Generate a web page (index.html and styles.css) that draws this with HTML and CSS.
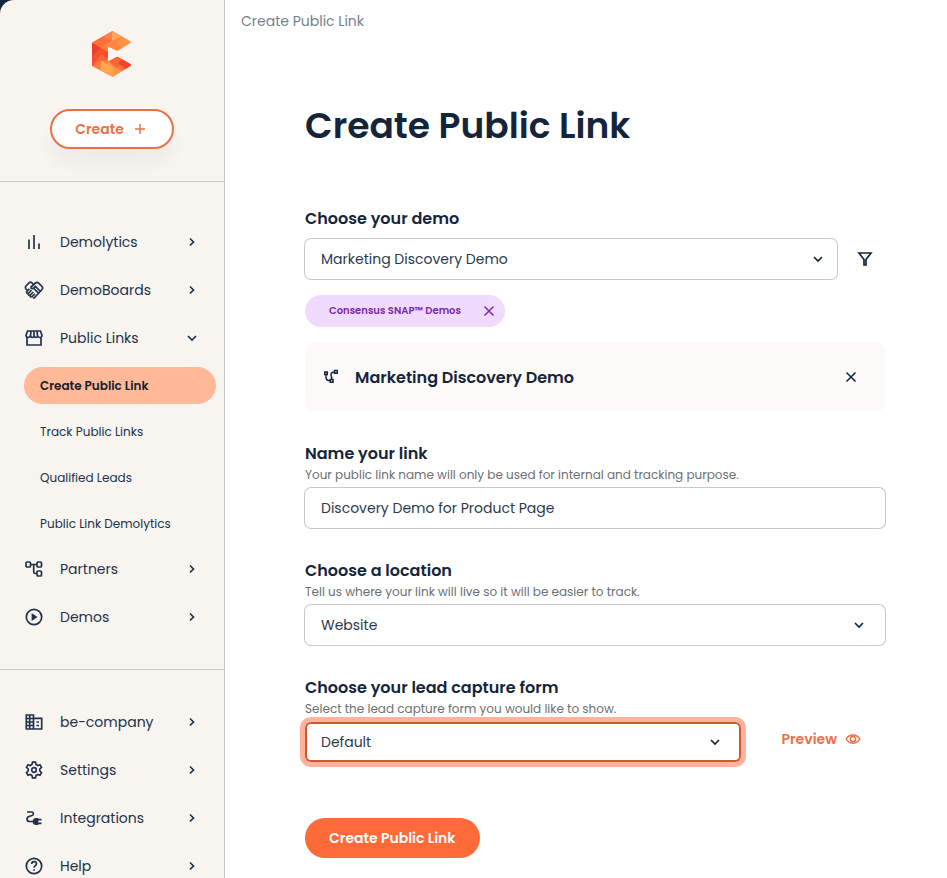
FILE: index.html
```html
<!DOCTYPE html>
<html lang="en">
<head>
    <meta charset="UTF-8">
    <meta name="viewport" content="width=device-width, initial-scale=1">
    <title>Create Public Link</title>
    <link rel="stylesheet" href="styles.css">
</head>
<body>
    <svg class="sprite" width="0" height="0" aria-hidden="true">
        <symbol id="chevron" viewBox="0 0 16 16">
            <path d="M6 4.500 9.500 8 6 11.500"/>
        </symbol>
        <symbol id="chevron-down" viewBox="0 0 16 16">
            <path d="M4 6l4 4 4-4"/>
        </symbol>
        <symbol id="close" viewBox="0 0 16 16">
            <path d="M3.500 3.500l9 9M12.500 3.500l-9 9"/>
        </symbol>
    </svg>

    <div class="layout">
        <aside class="sidebar">
            <div class="sidebar-top">
                <svg class="logo" viewBox="0 0 40 46" role="img" aria-label="Consensus">
                    <defs>
                        <clipPath id="logo-shape">
                            <path d="M20 .3Q20.800 0 21.600.5L38.500 10.300Q39.800 11.200 38.500 12L26.300 19.500Q25.500 20 24.500 19.500L17.500 16Q16 15.300 16 17V29Q16 30.500 17.500 29.800L24.500 26Q25.500 25.500 26.300 26L38.500 33Q39.800 34 38.500 35L21.600 45.200Q20.500 46 19.400 45.200L1 35.500Q0 35 0 34V12.500Q0 11.500 1 11Z"/>
                        </clipPath>
                        <linearGradient id="logo-top" x1="0" y1="0" x2="1" y2="0">
                            <stop offset="0" stop-color="#fb6a36"/>
                            <stop offset="1" stop-color="#ffa04a"/>
                        </linearGradient>
                        <linearGradient id="logo-bottom" x1="0" y1="0" x2="1" y2="0">
                            <stop offset="0" stop-color="#ff8b42"/>
                            <stop offset=".5" stop-color="#ff9646"/>
                            <stop offset="1" stop-color="#f0402a"/>
                        </linearGradient>
                    </defs>
                    <g clip-path="url(#logo-shape)">
                        <path fill="url(#logo-top)" d="M0 0h40v23H0Z"/>
                        <path fill="url(#logo-bottom)" d="M0 23h40v23H0Z"/>
                        <path fill="#fa8050" d="M10 5.500 20 0v10Z"/>
                        <path fill="#ffa661" d="M20 0v10l10-5Z"/>
                        <path fill="#fc6f38" d="M10 5.500 20 10l-9 5L0 12Z"/>
                        <path fill="#ff8840" d="M11 15l9-5 10 5-5 5Z"/>
                        <path fill="#f4502c" d="M0 12l16 9v6L0 36Z"/>
                        <path fill="#ea4029" d="M0 12l9 5-9 8Z"/>
                        <path fill="#fb6636" d="M0 36l9-13 7 6Z"/>
                        <path fill="#ff7d40" d="M0 35l10-6 11 6v11Z"/>
                        <path fill="#ffa650" d="M10 30l11 6v10L8 39Z"/>
                        <path fill="#ff9244" d="M21 36l10 4-10 6Z"/>
                        <path fill="#fb6536" d="M16 30l9-5 8 5-8 7Z"/>
                        <path fill="#f0442b" d="M30 28l10 6-6 4-8-6Z"/>
                    </g>
                </svg>
                <button type="button" class="btn-create">
                    Create
                    <svg class="plus" viewBox="0 0 12 12"><path d="M6 1v10M1 6h10"/></svg>
                </button>
            </div>

            <nav class="menu">
                <a href="#" class="menu-item">
                    <svg class="icon" viewBox="0 0 20 20"><path d="M5 7.500V17M10 3v14M15 11.500V17"/></svg>
                    <span>Demolytics</span>
                    <svg class="arrow"><use href="#chevron"/></svg>
                </a>
                <a href="#" class="menu-item">
                    <svg class="icon" viewBox="0 0 20 20"><path d="M3.200 10.200 2 9Q.8 7.500 2 6L5 2.800Q6.500 1.500 8 2.800L9 3.800M6.500 7.500 11.500 3Q13 1.800 14.500 3L18 6.500Q19.300 8 18 9.500L10.700 17.500Q9.800 18.300 9 17.500M6.500 7.500Q8 9.300 9.800 8L11.500 6.500 16 11M9.800 8.500 14 12.700M2.700 11.500 5.500 8.800M4.200 13.500 7.500 10.200M6 15.300 9.300 12M7.700 17 11 13.800M2.700 11.500Q2 13 4.200 13.500 4 15.500 6 15.300 6 17 7.700 17"/></svg>
                    <span>DemoBoards</span>
                    <svg class="arrow"><use href="#chevron"/></svg>
                </a>
                <a href="#" class="menu-item">
                    <svg class="icon" viewBox="0 0 20 20"><path d="M3.500 3h13L18 7.500Q17.800 9.500 16 9.500T13.500 7.700Q13 9.500 11.700 9.500T10 7.700Q9.500 9.500 8.200 9.500T6.500 7.700Q5.700 9.500 4 9.500T2 7.500ZM3 9.500V17h14V9.500M7 3l-.5 5M10 3v5M13 3l.5 5"/></svg>
                    <span>Public Links</span>
                    <svg class="arrow"><use href="#chevron-down"/></svg>
                </a>
                <div class="submenu">
                    <a href="#" class="active">Create Public Link</a>
                    <a href="#">Track Public Links</a>
                    <a href="#">Qualified Leads</a>
                    <a href="#">Public Link Demolytics</a>
                </div>
                <a href="#" class="menu-item">
                    <svg class="icon" viewBox="0 0 20 20"><rect x="2" y="3" width="4.500" height="5" rx="1"/><rect x="13" y="3" width="4.500" height="5" rx="1"/><rect x="13" y="12" width="4.500" height="5" rx="1"/><path d="M6.500 5.500H13M9.700 5.500V13q0 1.500 1.500 1.500H13"/></svg>
                    <span>Partners</span>
                    <svg class="arrow"><use href="#chevron"/></svg>
                </a>
                <a href="#" class="menu-item">
                    <svg class="icon" viewBox="0 0 20 20"><circle cx="10" cy="10" r="7.700"/><path class="solid" d="M8.500 7.700l3.500 2.300-3.500 2.300Z"/></svg>
                    <span>Demos</span>
                    <svg class="arrow"><use href="#chevron"/></svg>
                </a>
            </nav>

            <nav class="menu menu-bottom">
                <a href="#" class="menu-item">
                    <svg class="icon" viewBox="0 0 20 20"><path d="M2.300 3H9.500v14H2.300ZM9.500 6.300H17.700V17H9.500M2.300 6.500h7.200M2.300 10h7.200M2.300 13.500h7.200M5.700 3v14M12.500 10H15M12.500 13.500H15"/></svg>
                    <span>be-company</span>
                    <svg class="arrow"><use href="#chevron"/></svg>
                </a>
                <a href="#" class="menu-item">
                    <svg class="icon" viewBox="0 0 20 20"><circle cx="10" cy="10" r="2.300"/><path d="M8.500 2.200h3l.5 2.300 1.800 1 2.200-.8 1.500 2.600L15.800 9v2l1.700 1.700-1.500 2.600-2.200-.8-1.800 1-.5 2.300h-3L8 15.500l-1.800-1-2.200.8-1.500-2.600L4.200 11V9L2.500 7.300 4 4.700l2.200.8L8 4.500Z"/></svg>
                    <span>Settings</span>
                    <svg class="arrow"><use href="#chevron"/></svg>
                </a>
                <a href="#" class="menu-item">
                    <svg class="icon" viewBox="0 0 20 20"><path d="M3 4h4.500c2.500 0 2.500 3 .5 3.500L5 8.500c-2.800 1-2.500 5 .5 5H9"/><path class="solid" d="M9.500 13.500c0-1.500 1-2.700 2.700-2.700H13.500v5.400h-1.300C10.500 16.200 9.500 15 9.500 13.500Z"/><path d="M14 11.700h3.500M14 15.300h3.500"/></svg>
                    <span>Integrations</span>
                    <svg class="arrow"><use href="#chevron"/></svg>
                </a>
                <a href="#" class="menu-item">
                    <svg class="icon" viewBox="0 0 20 20"><circle cx="10" cy="10" r="7.700"/><path d="M7.700 8c0-3.200 4.800-3 4.800-.2 0 1.900-2.400 1.900-2.400 4M10.100 13.200v1.500"/></svg>
                    <span>Help</span>
                    <svg class="arrow"><use href="#chevron"/></svg>
                </a>
            </nav>
        </aside>

        <main class="content">
            <div class="breadcrumb">Create Public Link</div>
            <form class="link-form">
                <h1>Create Public Link</h1>

                <div class="field">
                    <label for="demo">Choose your demo</label>
                    <div class="field-row demo-row">
                        <div class="select">
                            <select id="demo">
                                <option>Marketing Discovery Demo</option>
                            </select>
                            <svg class="arrow"><use href="#chevron-down"/></svg>
                        </div>
                        <button type="button" class="icon-btn filter" aria-label="Filter demos">
                            <svg viewBox="0 0 16 16"><path d="M2 2h12L9 8.500V14H7V8.500Z"/></svg>
                        </button>
                    </div>
                    <div class="tag">
                        Consensus SNAP™ Demos
                        <button type="button" class="icon-btn" aria-label="Remove filter"><svg><use href="#close"/></svg></button>
                    </div>
                    <div class="selected-demo">
                        <svg class="path-icon" viewBox="0 0 16 16"><path d="M1.700 3h2.600v2.600H1.700ZM11.500 1.500h2.700v2.700h-2.700ZM7.300 10.500h2.700v2.700H7.300ZM3 5.600V8q0 3.800 4.300 3.800M11.500 3Q8 3 8 6q0 1 .6 2v2.500"/></svg>
                        <span>Marketing Discovery Demo</span>
                        <button type="button" class="icon-btn" aria-label="Remove demo"><svg><use href="#close"/></svg></button>
                    </div>
                </div>

                <div class="field">
                    <label for="name">Name your link</label>
                    <p class="hint">Your public link name will only be used for internal and tracking purpose.</p>
                    <input type="text" id="name" value="Discovery Demo for Product Page">
                </div>

                <div class="field">
                    <label for="location">Choose a location</label>
                    <p class="hint">Tell us where your link will live so it will be easier to track.</p>
                    <div class="select">
                        <select id="location">
                            <option>Website</option>
                        </select>
                        <svg class="arrow"><use href="#chevron-down"/></svg>
                    </div>
                </div>

                <div class="field">
                    <label for="lead-form">Choose your lead capture form</label>
                    <p class="hint">Select the lead capture form you would like to show.</p>
                    <div class="field-row">
                        <div class="select focused">
                            <select id="lead-form">
                                <option>Default</option>
                            </select>
                            <svg class="arrow"><use href="#chevron-down"/></svg>
                        </div>
                        <a href="#" class="preview">
                            Preview
                            <svg viewBox="0 0 16 16"><path d="M1.200 8C4 2.500 12 2.500 14.800 8 12 13.500 4 13.500 1.200 8Z"/><circle cx="8" cy="8" r="2.600"/></svg>
                        </a>
                    </div>
                </div>

                <button type="submit" class="btn-submit">Create Public Link</button>
            </form>
        </main>
    </div>
</body>
</html>
```
FILE: styles.css
```css
* {
    box-sizing: border-box;
}
body {
    margin: 0;
    background-color: #fff;
    color: #14253b;
    font-family: Poppins, Inter, sans-serif;
    font-size: 14px;
}
button, input, select {
    font-family: inherit;
}
a {
    color: inherit;
    text-decoration: none;
}
svg {
    fill: none;
    stroke: currentColor;
    stroke-width: 1.5;
    flex: none;
}
.sprite {
    position: absolute;
}
.layout {
    display: flex;
    height: 100vh;
    overflow: hidden;
    background-color: #14253b;
}

/* sidebar */
.sidebar {
    flex: none;
    width: 225px;
    overflow: hidden;
    background-color: #f8f4f0;
    border-right: 1px solid #cac8c9;
    border-top-left-radius: 14px;
}
.sidebar-top {
    display: flex;
    flex-direction: column;
    align-items: center;
    gap: 32px;
    padding: 31px 0 32px;
    border-bottom: 1px solid #cac8c9;
}
.logo {
    width: 40px;
    height: 46px;
    stroke: none;
}
.btn-create {
    display: flex;
    align-items: center;
    justify-content: center;
    gap: 10px;
    width: 124px;
    height: 40px;
    padding: 0 3px 0 0;
    border: 2px solid #ec6f47;
    border-radius: 20px;
    background-color: #fff;
    color: #ec6f47;
    font-size: 14px;
    font-weight: 600;
    box-shadow: 0 14px 16px rgba(20, 20, 20, 0.04);
}
.plus {
    width: 12px;
    height: 12px;
}
.menu {
    padding: 36px 0 28px;
    color: #22324a;
}
.menu-bottom {
    padding-top: 28px;
    border-top: 1px solid #cac8c9;
}
.menu-item {
    display: flex;
    align-items: center;
    gap: 16px;
    height: 48px;
    padding: 0 24px;
}
.menu-item span {
    flex: 1;
}
.icon {
    width: 20px;
    height: 20px;
    stroke-width: 1.7;
}
.icon .solid {
    fill: currentColor;
}
.arrow {
    width: 16px;
    height: 16px;
    stroke-width: 1.7;
}
.submenu {
    display: flex;
    flex-direction: column;
    gap: 9px;
    padding: 5px 8px 3px 24px;
    font-size: 12px;
}
.submenu a {
    padding: 0 16px;
    border-radius: 19px;
    line-height: 37px;
}
.submenu .active {
    background-color: #ffb996;
    color: #17202e;
    font-weight: 600;
}

/* page */
.content {
    flex: 1;
    min-width: 0;
    background-color: #fff;
}
.breadcrumb {
    padding: 10px 16px;
    color: #757f8c;
    line-height: 22px;
}
.link-form {
    padding: 62px 62px 20px 80px;
}
h1 {
    margin: 0 0 59px;
    font-size: 36px;
    font-weight: 600;
    line-height: 44px;
}
.field {
    margin-bottom: 31px;
}
.field label {
    display: block;
    font-size: 16px;
    font-weight: 600;
    line-height: 24px;
}
.hint {
    margin: 0 0 4px;
    color: #6d6f73;
    font-size: 12px;
    line-height: 18px;
}
.field-row {
    display: flex;
    align-items: center;
}
.demo-row {
    margin-top: 8px;
}
.select {
    position: relative;
    flex: 1;
}
.select .arrow {
    position: absolute;
    top: 12px;
    right: 18px;
    pointer-events: none;
}
.demo-row .arrow {
    right: 11px;
}
.field input,
.field select {
    display: block;
    width: 100%;
    height: 40px;
    padding: 0 16px;
    border: 0;
    border-radius: 6px;
    background-color: #fff;
    box-shadow: 0 0 0 1px #c9c9cb;
    color: #2b3a4d;
    font-size: 14px;
    appearance: none;
}
.field .focused select {
    box-shadow: inset 0 0 0 2px #d2562e, 0 0 0 5px #ffb29c;
}
.icon-btn {
    display: flex;
    padding: 0;
    border: 0;
    background: none;
    color: inherit;
}
.icon-btn svg {
    width: 16px;
    height: 16px;
}
.filter {
    margin: 0 12px 0 20px;
}
.filter svg {
    stroke-width: 1.7;
}
.tag {
    display: flex;
    align-items: center;
    gap: 20px;
    width: fit-content;
    height: 32px;
    margin: 16px 0;
    padding: 0 8px 0 24px;
    border-radius: 16px;
    background-color: #f0dafe;
    color: #7b2aa5;
    font-size: 10px;
    font-weight: 600;
}
.selected-demo {
    display: flex;
    align-items: center;
    gap: 16px;
    height: 68px;
    padding: 0 26px 0 18px;
    border-radius: 8px;
    background-color: #fbfaf9;
    font-size: 16px;
    font-weight: 600;
}
.selected-demo span {
    flex: 1;
}
.path-icon {
    width: 16px;
    height: 16px;
}
.preview {
    display: flex;
    align-items: center;
    gap: 8px;
    margin: 0 24px 0 40px;
    padding-bottom: 6px;
    color: #ec6f47;
    font-weight: 600;
}
.preview svg {
    width: 16px;
    height: 16px;
}
.btn-submit {
    height: 40px;
    margin-top: 25px;
    padding: 0 24px;
    border: 0;
    border-radius: 20px;
    background-color: #ff6a39;
    color: #fff;
    font-size: 14px;
    font-weight: 600;
}
```
